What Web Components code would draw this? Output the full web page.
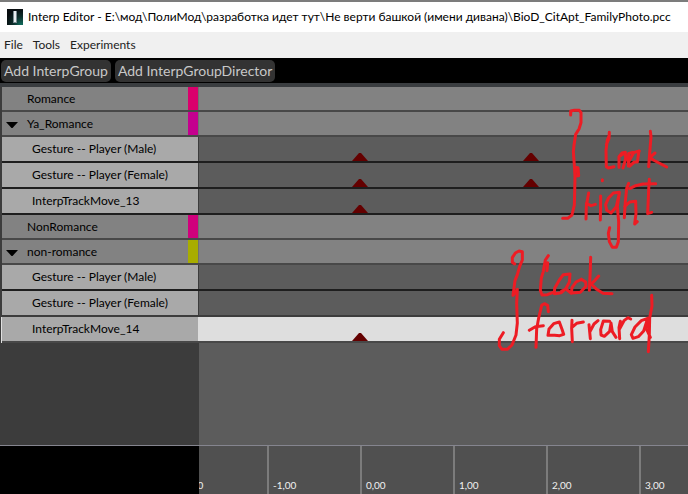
<!DOCTYPE html>
<html lang="ru">
<head>
<meta charset="utf-8">
<title>Interp Editor</title>
<style>
html, body { margin: 0; height: 100%; }
body { font-family: Lato, "Open Sans", "Noto Sans", sans-serif; font-size: 12px; color: #000; background: #5c5c5c; overflow: hidden; }
</style>
</head>
<body>
<interp-editor></interp-editor>
<script>
class Base extends HTMLElement {
  connectedCallback() {
    if (this.shadowRoot) return;
    this.attachShadow({ mode: 'open' }).innerHTML = this.render();
  }
}

customElements.define('title-bar', class extends Base {
  render() {
    return `<style>
      :host { display: flex; align-items: center; gap: 5px; height: 30px; padding: 0 7px; background: #fff; border-top: 2px solid #7c7c7c; white-space: nowrap; }
      svg { flex: none; }
      h1 { margin: 0; font-size: 12px; line-height: 16px; font-weight: 400; }
    </style>
    <svg width="16" height="16" viewBox="0 0 16 16" aria-hidden="true">
      <defs><radialGradient id="g" cx=".9" cy="1" r="1"><stop offset="0" stop-color="#12705f"/><stop offset=".5" stop-color="#0d302d"/><stop offset="1" stop-color="#080d10"/></radialGradient></defs>
      <rect width="16" height="16" fill="url(#g)"/><rect x="6" y="2" width="4" height="12" fill="#7c8b92"/><rect x="7" y="2" width="2" height="11" fill="#e8edef"/>
    </svg>
    <h1><slot></slot></h1>`;
  }
});

customElements.define('menu-bar', class extends Base {
  render() {
    return `<style>
      :host { display: flex; align-items: center; gap: 10px; height: 26px; padding: 0 4px; background: #f0f0f0; }
    </style><slot></slot>`;
  }
});

customElements.define('menu-entry', class extends Base {
  render() {
    return `<style>
      :host { display: block; }
      button { display: block; border: 0; padding: 0; background: none; font: inherit; line-height: 18px; color: #222; }
    </style><button type="button"><slot></slot></button>`;
  }
});

customElements.define('tool-bar', class extends Base {
  render() {
    return `<style>
      :host { display: flex; align-items: center; gap: 4px; height: 25px; padding: 0 1px; background: #000; }
    </style><slot></slot>`;
  }
});

customElements.define('tool-button', class extends Base {
  render() {
    return `<style>
      :host { display: block; }
      button { display: block; border: 0; border-radius: 5px; padding: 0 3px; height: 22px; background: #333; font: inherit; font-size: 14px; line-height: 20px; color: #c8c8c8; white-space: nowrap; }
    </style><button type="button"><slot></slot></button>`;
  }
});

customElements.define('key-frame', class extends Base {
  render() {
    return `<style>
      :host { position: absolute; bottom: 0; left: ${this.getAttribute('at')}px; width: 16px; height: 8px; margin-left: -8px; }
      svg { display: block; }
    </style><svg width="16" height="8" viewBox="0 0 16 8"><path d="M0 8 7 0h2l7 8z" fill="#640000"/></svg>`;
  }
});

customElements.define('group-row', class extends Base {
  render() {
    const open = this.hasAttribute('open');
    return `<style>
      :host { display: grid; grid-template-columns: 196px 1fr; height: 23px; border-bottom: 2px solid #484848; background: #828282; }
      .head { display: grid; grid-template-columns: 25px 1fr 10px; align-items: center; }
      button { border: 0; padding: 0 0 0 4px; background: none; height: 23px; display: flex; align-items: center; }
      svg { margin-top: 3px; }
      .name { line-height: 22px; }
      .swatch { height: 100%; background: ${this.getAttribute('color')}; }
      .lane { border-left: 1px solid #707070; }
    </style>
    <div class="head">${open ? '<button type="button" aria-expanded="true" aria-label="Collapse"><svg width="12" height="6" viewBox="0 0 12 6"><path d="M0 0h12L6.500 6h-1z" fill="#000"/></svg></button>' : '<span></span>'}
      <span class="name"><slot></slot></span><span class="swatch"></span></div>
    <div class="lane"></div>`;
  }
});

customElements.define('track-row', class extends Base {
  render() {
    return `<style>
      :host { display: grid; grid-template-columns: 196px 1fr; height: 24px; border-bottom: 2px solid #1e1e1e; background: #5c5c5c; }
      :host([selected]) { border-bottom-color: #484848; box-shadow: -1px 0 #e0e0e0; }
      :host([last]) { border-bottom-color: #3c3c3c; }
      .name { padding-left: 30px; background: #a9a9a9; line-height: 24px; }
      .lane { position: relative; border-left: 1px solid #3c3c3c; }
      :host([selected]) .lane { background: #dedede; border-color: #dedede; }
    </style>
    <div class="name"><slot></slot></div>
    <div class="lane"><slot name="keys"></slot></div>`;
  }
});

customElements.define('track-list', class extends Base {
  render() {
    return `<style>
      :host { display: block; flex: 1; padding-left: 2px; border-top: 4px solid #484848; border-image: linear-gradient(#3a3d40 0 25%, #808890 25% 50%, #454545 50%) 4 0 0 0; background: linear-gradient(90deg, #3c3c3c 0 199px, #5c5c5c 199px); }
    </style><slot></slot>`;
  }
});

customElements.define('time-ruler', class extends Base {
  render() {
    const marks = this.getAttribute('marks').split(' ');
    return `<style>
      :host { display: grid; grid-template-columns: 199px 1fr; height: 48px; border-top: 1px solid #85858f; background: #000; }
      .scale { overflow: hidden; background: #505050; }
      ol { display: grid; grid-auto-flow: column; grid-auto-columns: 93px; justify-content: start; list-style: none; margin: 0 0 0 -25px; padding: 0; height: 100%; }
      li { display: flex; align-items: flex-end; border-left: 2px solid #7c7c7c; padding: 0 0 2px 4px; font-size: 10px; line-height: 14px; color: #f0f0f0; }
    </style>
    <span></span><div class="scale"><ol>${marks.map(m => `<li>${m}</li>`).join('')}</ol></div>`;
  }
});

/* Freehand pen strokes laid over the timeline. */
const INK = {
  upper: { x: 540, y: 90, w: 148, h: 170, d: `
    M92 75 V63 L103 61 H118 L123 68 V98 L117 117 L107 133 L102 166 L100 185 L103 225 L105 260 L104 310 L103 345 L96 375 L83 385 H68
    M104 232 L114 233 L116 257 L106 258 V236
    M208 127 L207 145 L199 164 M208 136 L202 150 L198 181 L199 230 L205 234 L222 230
    M256 187 L246 189 L237 200 V232 M237 200 L256 187 L257 207 L249 234
    M278 187 L266 190 L265 228 M298 183 L281 188 L266 215 L268 229 L283 216 H292 L297 183
    M331 124 L333 140 L329 190 L326 230 M345 189 L330 202 L340 210 L380 231
    M187 269 V272
    M146 309 L139 347 L138 387 M139 340 L153 347 L166 343 M182 318 L181 390
    M238 307 L220 309 L205 325 L197 344 L200 361 L213 369 L229 350 L238 309 L232 350 L236 395 L235 455 L229 472 L217 472 L208 455 L205 430 L209 413
    M266 280 L260 295 L256 335 L253 383 M254 350 L269 336 L287 334 L288 370 L284 402 L292 395
    M269 296 L287 287 L309 282 L347 281 M328 268 L326 300 L323 371 L335 367` },
  lower: { x: 480, y: 235, w: 208, h: 130, d: `
    M104 87 L97 82 V68 L106 54 L117 48 L127 50 L127 75 L119 94 L112 119 L105 137 L99 181 L112 163 L110 205 L112 264 L108 300 L96 330 L82 343 L66 343 L58 332 V313 L70 293
    M201 107 L203 83 M205 62 L196 75 L190 109 L184 129 L181 166 L186 180 L202 179 L219 172
    M270 117 L250 119 L238 135 L224 160 L223 176 L244 173 L258 160 L268 142 L270 117
    M304 133 L288 141 L276 158 L274 175 L258 162 L245 168 M276 174 L301 172 L318 154 L317 141 L304 133
    M332 67 L331 102 L328 166 M356 123 L341 140 L334 147 L350 163 L369 175 L396 176
    M205 230 L203 211 L193 206 L185 211 L176 249 L170 282 L168 337 M148 286 L166 275 L190 272
    M238 261 L221 266 L207 282 L204 301 L224 301 L239 302 L251 298 L246 283 L238 261
    M276 256 L275 280 L277 320 M276 277 L290 265 L310 261 M327 269 L331 311 M330 290 L342 267 L354 257
    M389 259 L370 258 L362 284 L363 300 L373 304 L389 289 L393 264 L397 290 L408 307
    M421 259 L417 278 L419 311 M419 281 L432 257 L444 248 L452 252
    M503 250 L484 257 L465 276 L454 299 L459 310 L475 305 L491 288 L503 250 L499 281 L511 307
    M515 181 L516 213 L509 249 L508 300 L505 350` }
};

customElements.define('ink-note', class extends Base {
  render() {
    const n = INK[this.getAttribute('kind')];
    return `<style>
      :host { position: absolute; left: ${n.x}px; top: ${n.y}px; pointer-events: none; }
      svg { display: block; }
    </style>
    <svg width="${n.w}" height="${n.h}" viewBox="0 0 ${n.w * 3} ${n.h * 3}" role="img" aria-label="${this.getAttribute('label')}">
      <path d="${n.d}" fill="none" stroke="#ed1c24" stroke-width="9" stroke-linecap="round" stroke-linejoin="round"/>
    </svg>`;
  }
});

customElements.define('interp-editor', class extends Base {
  render() {
    return `<style>
      :host { display: flex; flex-direction: column; position: relative; min-height: 100vh; overflow: hidden; }
    </style>
    <title-bar>Interp Editor - E:\\мод\\ПолиМод\\разработка идет тут\\Не верти башкой (имени дивана)\\BioD_CitApt_FamilyPhoto.pcc</title-bar>
    <menu-bar><menu-entry>File</menu-entry><menu-entry>Tools</menu-entry><menu-entry>Experiments</menu-entry></menu-bar>
    <tool-bar><tool-button>Add InterpGroup</tool-button><tool-button>Add InterpGroupDirector</tool-button></tool-bar>
    <track-list>
      <group-row color="#d9006c">Romance</group-row>
      <group-row color="#c4008e" open>Ya_Romance</group-row>
      <track-row>Gesture -- Player (Male)<key-frame slot="keys" at="161"></key-frame><key-frame slot="keys" at="332"></key-frame></track-row>
      <track-row>Gesture -- Player (Female)<key-frame slot="keys" at="161"></key-frame><key-frame slot="keys" at="332"></key-frame></track-row>
      <track-row>InterpTrackMove_13<key-frame slot="keys" at="161"></key-frame></track-row>
      <group-row color="#d0007c">NonRomance</group-row>
      <group-row color="#a8ad00" open>non-romance</group-row>
      <track-row>Gesture -- Player (Male)</track-row>
      <track-row last>Gesture -- Player (Female)</track-row>
      <track-row selected>InterpTrackMove_14<key-frame slot="keys" at="161"></key-frame></track-row>
    </track-list>
    <time-ruler marks="-2,00 -1,00 0,00 1,00 2,00 3,00"></time-ruler>
    <ink-note kind="upper" label="Look right"></ink-note>
    <ink-note kind="lower" label="Look forward"></ink-note>`;
  }
});
</script>
</body>
</html>
